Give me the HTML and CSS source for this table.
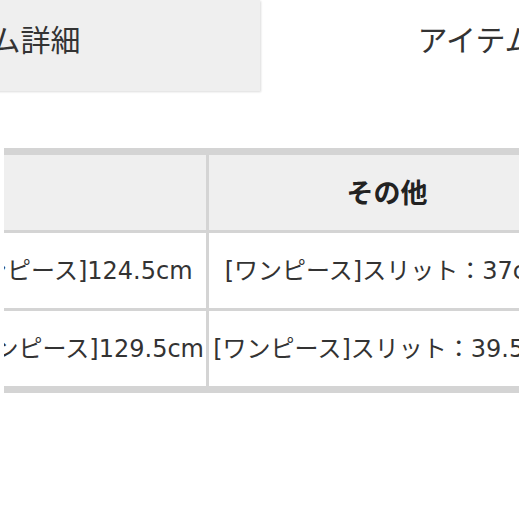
FILE: index.html
```html
<!DOCTYPE html>
<html lang="ja">
<head>
<meta charset="utf-8">
<title>アイテム詳細</title>
<link rel="stylesheet" href="styles.css">
</head>
<body>
<div class="page">
  <nav class="tabs">
    <div class="tab tab-active">アイテム詳細</div>
    <div class="tab tab-next">アイテムレビュー</div>
  </nav>
  <div class="table-wrap">
    <table class="spec">
      <thead>
        <tr>
          <th class="col-size">着丈</th>
          <th class="col-other">その他</th>
        </tr>
      </thead>
      <tbody>
        <tr>
          <td>[ジャケット]61cm [ワンピース]124.5cm</td>
          <td>[ワンピース]スリット：37cm</td>
        </tr>
        <tr>
          <td>[ジャケット]64.5cm [ワンピース]129.5cm</td>
          <td>[ワンピース]スリット：39.5cm</td>
        </tr>
      </tbody>
    </table>
  </div>
</div>
</body>
</html>
```
FILE: styles.css
```css
* {
  box-sizing: border-box;
}

html,
body {
  margin: 0;
  padding: 0;
  background: #fff;
}

body {
  width: 519px;
  height: 519px;
  overflow: hidden;
  font-family: "DejaVu Sans", "Noto Sans CJK JP", sans-serif;
  color: #333;
}

.page {
  width: 519px;
  overflow: hidden;
}

.tabs {
  display: flex;
  height: 91px;
  margin-left: -276px;
}

.tab {
  flex: 0 0 auto;
  display: flex;
  align-items: center;
  justify-content: center;
  padding-bottom: 15px;
  font-family: "Noto Sans CJK JP", sans-serif;
  font-size: 30px;
  color: #333;
  white-space: nowrap;
}

.tab-active {
  width: 536px;
  background: #efefef;
  box-shadow: 1px 1px 2px rgba(0, 0, 0, 0.14);
}

.tab-next {
  width: 552px;
}

.table-wrap {
  display: flex;
  justify-content: flex-end;
  width: 568px;
  margin: 57px 0 0 4px;
  overflow: hidden;
}

.spec {
  flex: 0 0 auto;
  border-collapse: separate;
  border-spacing: 3px;
  border: 4px solid #d4d4d4;
  background: #d4d4d4;
  font-size: 24px;
}

.spec th,
.spec td {
  height: 75px;
  padding: 0 2px 4px;
  text-align: center;
  vertical-align: middle;
  white-space: nowrap;
  background: #fff;
}

.spec th {
  padding-bottom: 2px;
  background: #efefef;
  font-family: "Noto Sans CJK JP", sans-serif;
  font-size: 27px;
  font-weight: 700;
  color: #222;
}

.col-other {
  width: 356px;
}
```
